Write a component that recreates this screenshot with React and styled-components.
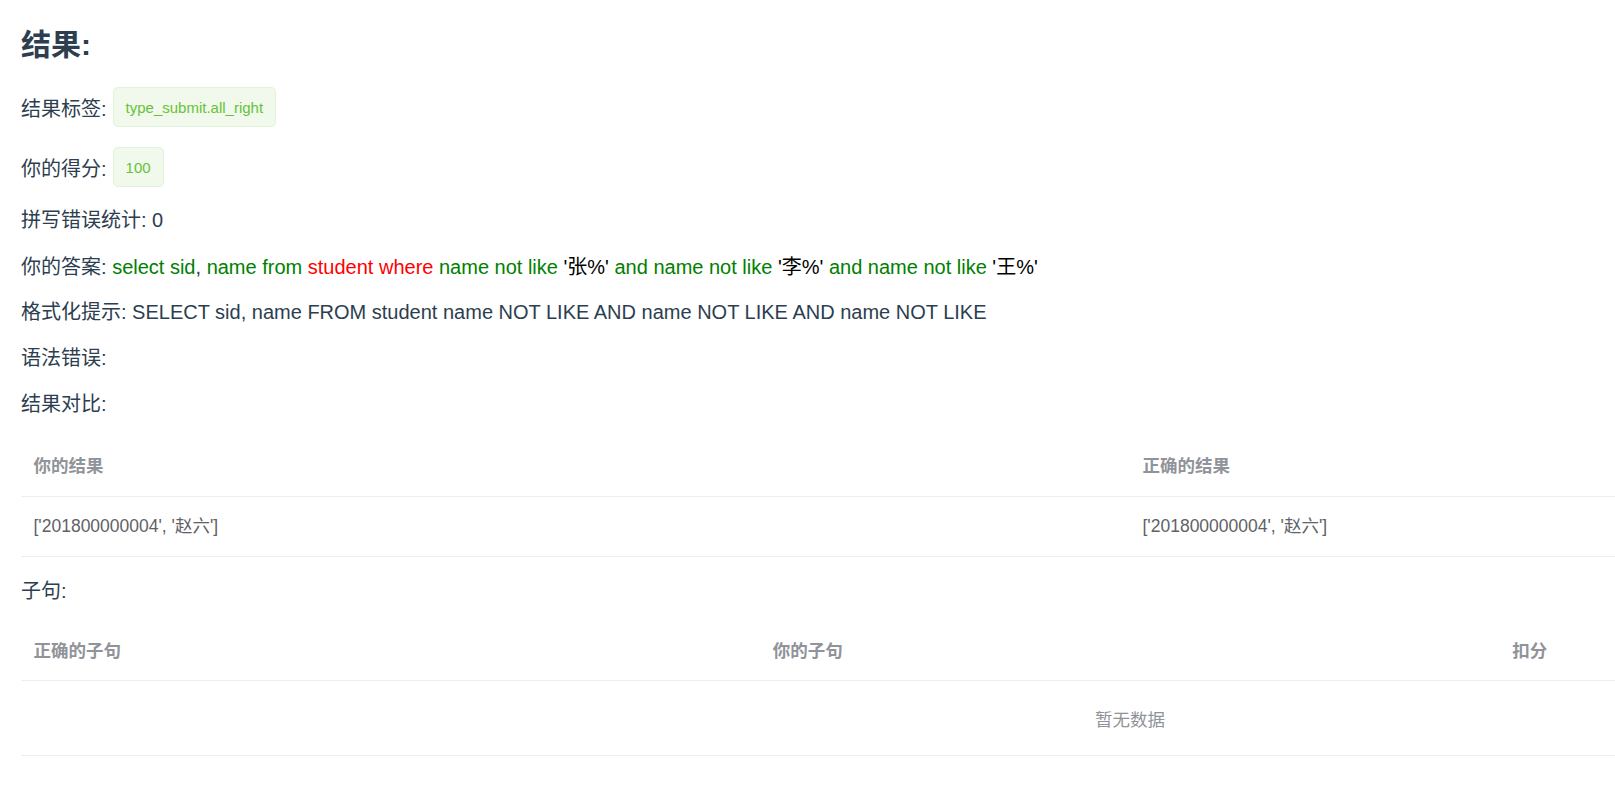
import React from 'react';
import styled, { createGlobalStyle } from 'styled-components';

const GlobalStyle = createGlobalStyle`
  html, body {
    margin: 0;
    padding: 0;
    background: #fff;
    overflow: hidden;
  }
  body {
    font-family: "Liberation Sans", Arial, "Noto Sans CJK SC", sans-serif;
    color: #2c3e50;
  }
`;

const Page = styled.div`
  width: 100vw;
  height: 100vh;
  overflow: hidden;
  padding: 25px 0 0 21px;
  box-sizing: border-box;
`;

const Title = styled.h2`
  margin: 0;
  font-size: 30px;
  line-height: 40px;
  font-weight: 700;
  color: #2c3e50;
`;

const Line = styled.p`
  margin: ${(p) => p.$top ?? 20}px 0 0;
  font-size: 20px;
  line-height: 26px;
  white-space: nowrap;
`;

const TagLine = styled.div`
  display: flex;
  align-items: center;
  gap: 6px;
  height: 40px;
  margin-top: ${(p) => p.$top ?? 20}px;
  font-size: 20px;
`;

const Tag = styled.span`
  display: inline-flex;
  align-items: center;
  box-sizing: border-box;
  height: 40px;
  padding: 0 12px;
  font-size: 15px;
  color: #67c23a;
  background: #f0f9eb;
  border: 1px solid #e1f3d8;
  border-radius: 5px;
`;

const Token = styled.span`
  color: ${(p) => p.$color};
`;

const Table = styled.table`
  width: 2218px;
  margin-top: ${(p) => p.$top ?? 20}px;
  border-collapse: collapse;
  table-layout: fixed;
  font-size: 17.5px;
`;

const HeadCell = styled.th`
  text-align: left;
  padding: 15px 12.5px;
  line-height: 28.75px;
  font-weight: 700;
  color: #909399;
  border-bottom: 1px solid #ebeef5;
`;

const Cell = styled.td`
  padding: 15px 12.5px;
  line-height: 28.75px;
  color: #606266;
  border-bottom: 1px solid #ebeef5;
`;

const EmptyCell = styled.td`
  height: 74px;
  padding: 0;
  text-align: center;
  color: #909399;
  border-bottom: 1px solid #ebeef5;
`;

const G = 'green';
const R = 'red';
const K = '#000';
const D = '#2c3e50';

const answer = [
  ['select sid', G],
  [', ', D],
  ['name from ', G],
  ['student where ', R],
  ['name not like ', G],
  ["'张%' ", K],
  ['and name not like ', G],
  ["'李%' ", K],
  ['and name not like ', G],
  ["'王%'", K],
];

const row = "['201800000004', '赵六']";

const App = () => {
  return (
    <Page>
      <GlobalStyle />
      <Title>结果:</Title>
      <TagLine $top={22}>
        结果标签:
        <Tag>type_submit.all_right</Tag>
      </TagLine>
      <TagLine>
        你的得分:
        <Tag>100</Tag>
      </TagLine>
      <Line>拼写错误统计: 0</Line>
      <Line $top={21}>
        你的答案:{' '}
        {answer.map(([text, color], i) => (
          <Token key={i} $color={color}>
            {text}
          </Token>
        ))}
      </Line>
      <Line $top={19}>
        格式化提示: SELECT sid, name FROM student name NOT LIKE AND name NOT LIKE AND name NOT LIKE
      </Line>
      <Line>语法错误:</Line>
      <Line>结果对比:</Line>
      <Table>
        <thead>
          <tr>
            <HeadCell>你的结果</HeadCell>
            <HeadCell>正确的结果</HeadCell>
          </tr>
        </thead>
        <tbody>
          <tr>
            <Cell>{row}</Cell>
            <Cell>{row}</Cell>
          </tr>
        </tbody>
      </Table>
      <Line $top={21}>子句:</Line>
      <Table $top={18}>
        <thead>
          <tr>
            <HeadCell>正确的子句</HeadCell>
            <HeadCell>你的子句</HeadCell>
            <HeadCell>扣分</HeadCell>
          </tr>
        </thead>
        <tbody>
          <tr>
            <EmptyCell colSpan={3}>暂无数据</EmptyCell>
          </tr>
        </tbody>
      </Table>
    </Page>
  );
};

export default App;
